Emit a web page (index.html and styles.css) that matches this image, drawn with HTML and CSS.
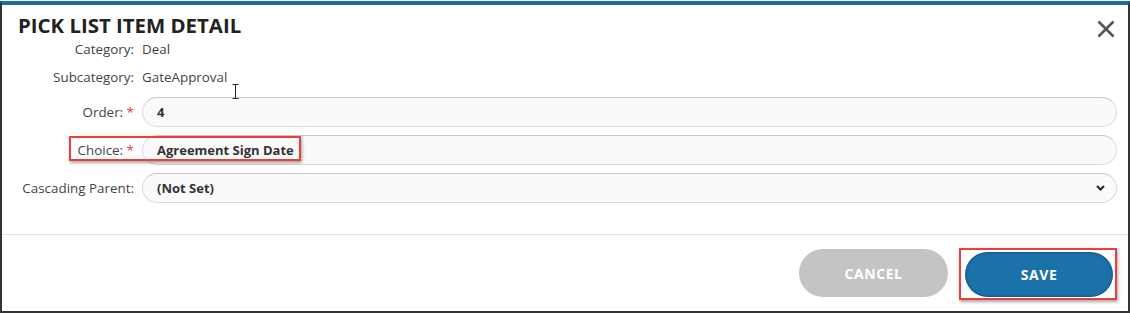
FILE: index.html
```html
<!DOCTYPE html>
<html lang="en">
<head>
    <meta charset="UTF-8">
    <title>Pick List Item Detail</title>
    <link rel="stylesheet" href="styles.css">
</head>
<body>
    <div class="dialog">
        <div class="dialog-head">
            <h1 class="dialog-title">PICK LIST ITEM DETAIL</h1>
            <button class="btn-close" type="button" aria-label="Close">
                <svg width="18" height="18" viewBox="0 0 18 18"><path d="M1.5 1.5 16.5 16.5M16.5 1.5 1.5 16.5" stroke="#555" stroke-width="2.6" fill="none"/></svg>
            </button>
        </div>

        <div class="dialog-body">
            <div class="form-grid">
                <label class="lbl lbl-text">Category:</label>
                <div class="val">Deal</div>

                <label class="lbl lbl-text">Subcategory:</label>
                <div class="val">GateApproval
                    <!-- mouse cursor in the shot -->
                    <svg class="ibeam" width="7" height="15" viewBox="0 0 7 15"><path d="M0.5 0.5h6M3.5 0.5v14M0.5 14.5h6" stroke="#222" stroke-width="1" fill="none"/></svg>
                </div>

                <label class="lbl">Order: <span class="req">*</span></label>
                <div class="field"><input class="inp" type="text" value="4"></div>

                <label class="lbl">Choice: <span class="req">*</span></label>
                <div class="field"><input class="inp" type="text" value="Agreement Sign Date"></div>

                <label class="lbl">Cascading Parent:</label>
                <div class="field">
                    <div class="inp sel">(Not Set)
                        <svg class="chev" width="9" height="6" viewBox="0 0 9 6"><path d="M1 1 4.5 4.5 8 1" stroke="#222" stroke-width="2" fill="none"/></svg>
                    </div>
                </div>

                <!-- highlight box from the screenshot -->
                <div class="mark mark-choice"></div>
            </div>
        </div>

        <div class="dialog-foot">
            <button class="btn btn-cancel" type="button">CANCEL</button>
            <div class="mark-wrap">
                <button class="btn btn-save" type="button">SAVE</button>
            </div>
        </div>
    </div>
</body>
</html>
```

FILE: styles.css
```css
* {
    margin: 0;
    padding: 0;
    box-sizing: border-box;
}
body {
    width: 1130px;
    height: 313px;
    font-family: "Open Sans", "Noto Sans", sans-serif;
    color: #444;
    background: #fff;
    padding-top: 1px;
}
.dialog {
    height: 312px;
    border-top: 4px solid #1a6ea5;
    border-left: 2px solid #333;
    border-right: 2px solid #333;
    border-bottom: 2px solid #333;
    display: flex;
    flex-direction: column;
}
.dialog-head {
    display: flex;
    justify-content: space-between;
    align-items: flex-start;
    padding: 7px 13px 0 16px;
}
.dialog-title {
    font-size: 20.4px;
    font-weight: 700;
    color: #222;
    line-height: 27px;
}
.btn-close {
    border: none;
    background: none;
    margin-top: 8px;
    width: 18px;
    height: 18px;
}
.dialog-body {
    padding: 0 11px 0 0;
    flex: 1;
    border-bottom: 1px solid #e3e3e3;
}
.form-grid {
    position: relative;
    display: grid;
    grid-template-columns: 140px 1fr;
    grid-template-rows: 20px 22px 30px 30px 30px;
    row-gap: 8px;
    font-size: 13.4px;
}
.lbl {
    text-align: right;
    padding-right: 8px;
    line-height: 20px;
    align-self: center;
    color: #444;
}
.lbl-text {
    align-self: start;
}
.req {
    color: #e23b3b;
}
.val {
    line-height: 20px;
    position: relative;
    color: #444;
}
.ibeam {
    position: absolute;
    left: 90px;
    top: 17px;
}
.field {
    height: 30px;
}
.inp {
    display: block;
    width: 100%;
    height: 30px;
    border: 1px solid #d9d9de;
    border-top-color: #c9c9cf;
    border-radius: 15px;
    background: #fafafa;
    padding: 0 14px;
    font-family: inherit;
    font-size: 13px;
    font-weight: 700;
    color: #333;
    outline: none;
}
.sel {
    position: relative;
    line-height: 28px;
}
.chev {
    position: absolute;
    right: 11px;
    top: 11px;
}
.mark {
    position: absolute;
    border: 2px solid #f03c3c;
    box-shadow: 1px 2px 3px rgba(0, 0, 0, 0.35);
    pointer-events: none;
}
.mark-choice {
    left: 67px;
    top: 97px;
    width: 232px;
    height: 25px;
}
.dialog-foot {
    display: flex;
    justify-content: flex-end;
    align-items: center;
    gap: 11px;
    height: 76px;
    padding: 0 11px 0 0;
}
.btn {
    border: none;
    border-radius: 24px;
    font-family: inherit;
    font-size: 14px;
    font-weight: 700;
    letter-spacing: 0.6px;
    color: #fff;
    cursor: pointer;
}
.btn-cancel {
    width: 149px;
    height: 48px;
    background: #c4c4c4;
}
.mark-wrap {
    border: 2px solid #f03c3c;
    padding: 2px 2px 1px 4px;
    box-shadow: 1px 2px 3px rgba(0, 0, 0, 0.35);
    margin-top: 1px;
}
.btn-save {
    display: block;
    width: 148px;
    height: 45px;
    background: #1a72a8;
    box-shadow: inset 0 0 3px rgba(0, 0, 0, 0.45);
}
```
